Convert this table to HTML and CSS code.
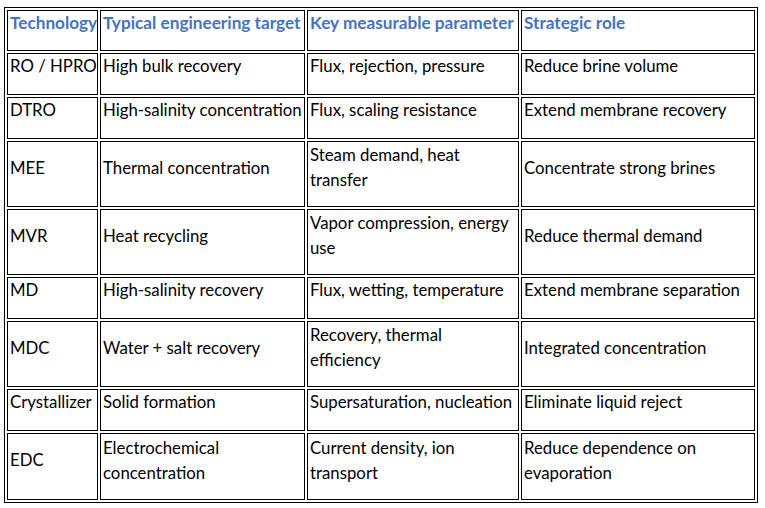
FILE: index.html
```html
<!DOCTYPE html>
<html lang="en">
<head>
<meta charset="utf-8">
<title>Technologies</title>
<link rel="stylesheet" href="styles.css">
</head>
<body>
<table class="grid">
  <thead>
    <tr class="row-head">
      <th class="c1">Technology</th>
      <th class="c2">Typical engineering target</th>
      <th class="c3">Key measurable parameter</th>
      <th class="c4">Strategic role</th>
    </tr>
  </thead>
  <tbody>
    <tr class="row-one">
      <td>RO / HPRO</td>
      <td>High bulk recovery</td>
      <td>Flux, rejection, pressure</td>
      <td>Reduce brine volume</td>
    </tr>
    <tr class="row-one">
      <td>DTRO</td>
      <td>High-salinity concentration</td>
      <td>Flux, scaling resistance</td>
      <td>Extend membrane recovery</td>
    </tr>
    <tr class="row-two">
      <td>MEE</td>
      <td>Thermal concentration</td>
      <td>Steam demand, heat<br>transfer</td>
      <td>Concentrate strong brines</td>
    </tr>
    <tr class="row-two">
      <td>MVR</td>
      <td>Heat recycling</td>
      <td>Vapor compression, energy<br>use</td>
      <td>Reduce thermal demand</td>
    </tr>
    <tr class="row-one">
      <td>MD</td>
      <td>High-salinity recovery</td>
      <td>Flux, wetting, temperature</td>
      <td>Extend membrane separation</td>
    </tr>
    <tr class="row-two">
      <td>MDC</td>
      <td>Water + salt recovery</td>
      <td>Recovery, thermal<br>efficiency</td>
      <td>Integrated concentration</td>
    </tr>
    <tr class="row-one">
      <td>Crystallizer</td>
      <td>Solid formation</td>
      <td>Supersaturation, nucleation</td>
      <td>Eliminate liquid reject</td>
    </tr>
    <tr class="row-last">
      <td>EDC</td>
      <td>Electrochemical<br>concentration</td>
      <td>Current density, ion<br>transport</td>
      <td>Reduce dependence on<br>evaporation</td>
    </tr>
  </tbody>
</table>
</body>
</html>
```
FILE: styles.css
```css
html, body {
  margin: 0;
  background: #ffffff;
}
body {
  padding: 7px 0 0 4px;
  font-family: Lato, "Open Sans", sans-serif;
  font-size: 16.8px;
  color: #000000;
}
.grid {
  table-layout: fixed;
  width: 754px;
  border: 1px solid #000000;
  border-collapse: separate;
  border-spacing: 2px;
}
.grid th,
.grid td {
  box-sizing: border-box;
  border: 1px solid #000000;
  padding: 0 0 14px 2px;
  line-height: 25px;
  vertical-align: middle;
  text-align: left;
  white-space: nowrap;
  overflow: hidden;
}
.grid th {
  color: #4472c4;
  font-weight: bold;
  font-size: 17.2px;
}
.row-head th {
  line-height: 23px;
  padding-bottom: 16px;
}
.row-one td {
  line-height: 23px;
  padding-bottom: 17px;
}
.c1 { width: 91px; }
.c2 { width: 205px; }
.c3 { width: 212px; }
.c4 { width: 234px; }
.row-head { height: 41px; }
.row-one { height: 42px; }
.row-two { height: 66px; }
.row-last { height: 67px; }
```
